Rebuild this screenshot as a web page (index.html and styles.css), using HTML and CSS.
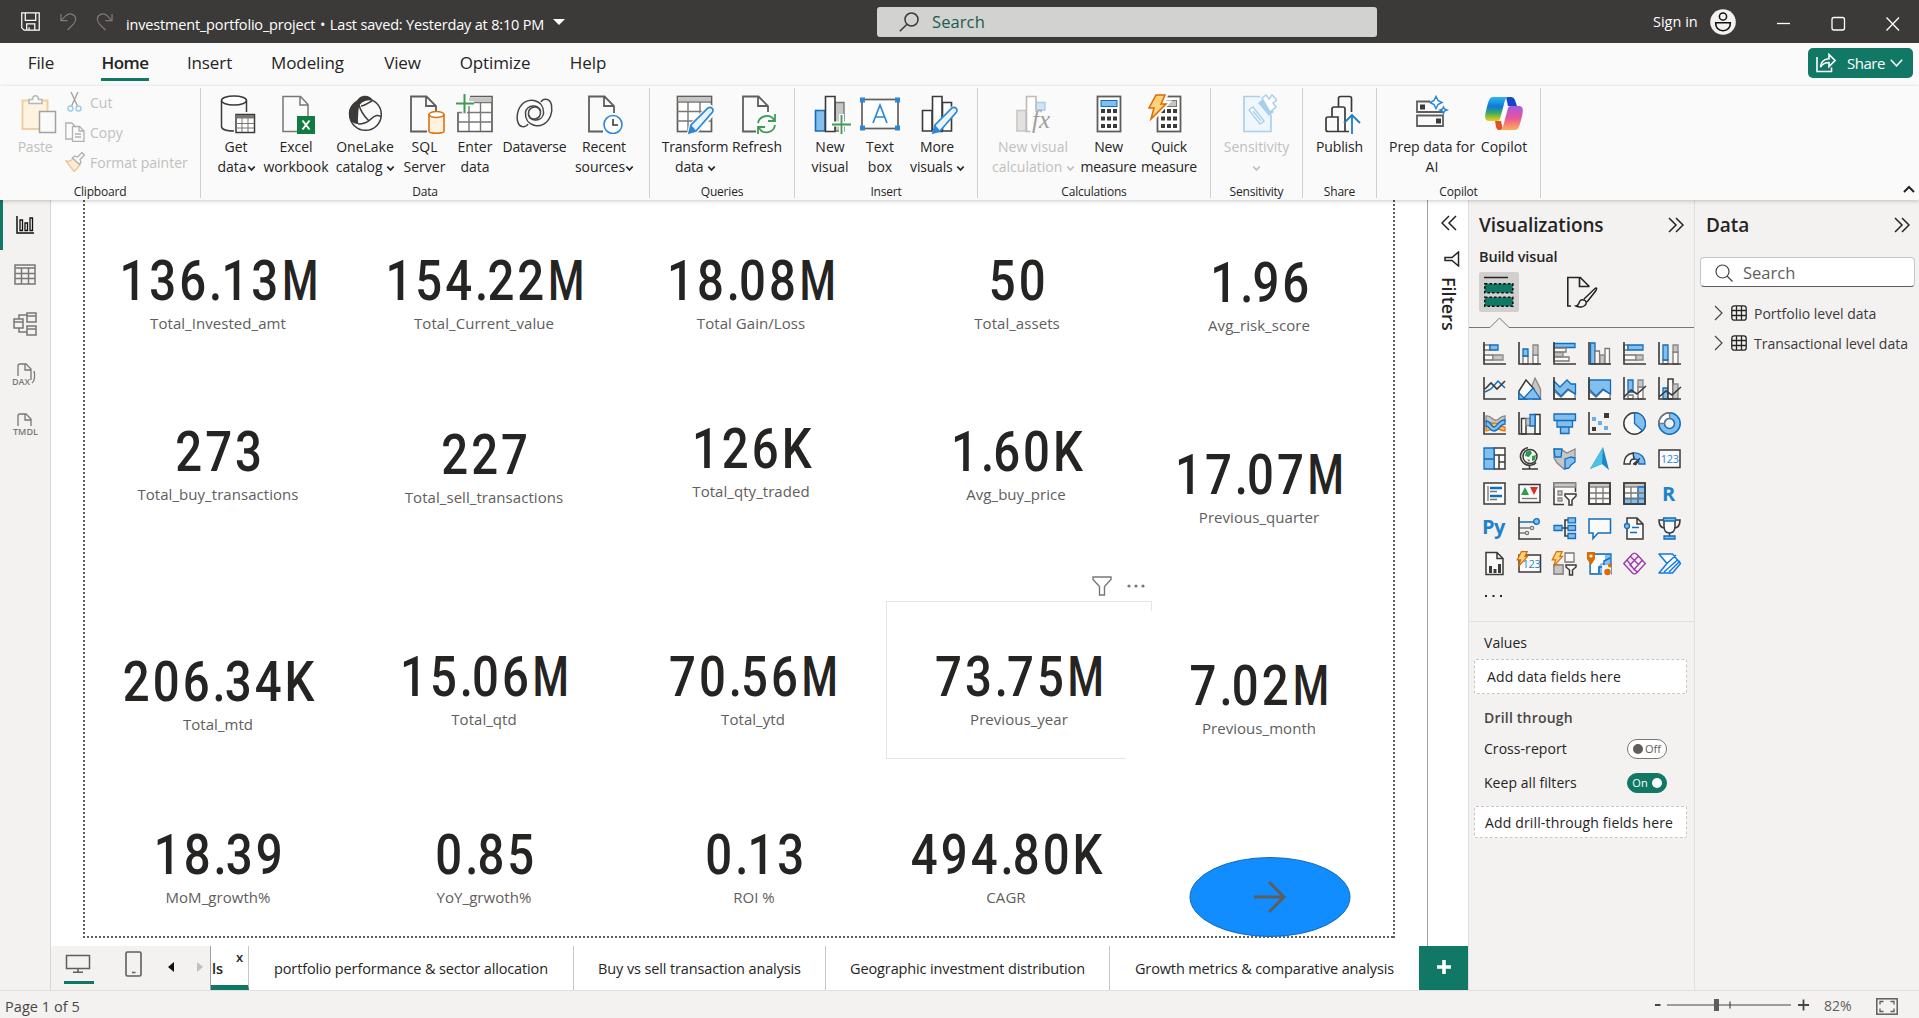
FILE: index.html
```html
<!DOCTYPE html>
<html lang="en">
<head>
<meta charset="utf-8">
<title>investment_portfolio_project</title>
<link rel="stylesheet" href="styles.css">
</head>
<body>
<svg class="defs" width="0" height="0">
  <defs>
    <linearGradient id="cpA" x1="0" y1="0" x2="0" y2="1"><stop offset="0" stop-color="#2bb6f0"/><stop offset=".4" stop-color="#0f78d8"/><stop offset=".65" stop-color="#35a968"/><stop offset="1" stop-color="#f3cf10"/></linearGradient>
    <linearGradient id="cpB" x1="0" y1="0" x2="0" y2="1"><stop offset="0" stop-color="#a25be8"/><stop offset=".5" stop-color="#e8559a"/><stop offset="1" stop-color="#ffae55"/></linearGradient>
    <symbol id="chev" viewBox="0 0 9 7"><path d="M1.3 1.5L4.5 5L7.7 1.5" fill="none" stroke="currentColor" stroke-width="1.8"/></symbol>
    <symbol id="dbl" viewBox="0 0 16 16"><path d="M1 1l7 7-7 7M8 1l7 7-7 7" fill="none" stroke="#252423" stroke-width="1.5"/></symbol>
    <symbol id="tbl" viewBox="0 0 16 16"><rect x=".8" y=".8" width="14.4" height="14.4" rx="2.5" fill="none" stroke="#252423" stroke-width="1.3"/><path d="M5.5 1v14M10.5 1v14M1 5.5h14M1 10.5h14" stroke="#252423" stroke-width="1.3"/></symbol>
    <symbol id="bolt" viewBox="0 0 12 15"><path d="M5 .6h5.5L8.2 5h2.6L2.5 14.2 4.3 8.4H1z" fill="#ffd27d" stroke="#dd6b00" stroke-width="1.1"/></symbol>
    <symbol id="funnel" viewBox="0 0 20 20"><path d="M1 1h18v2.5l-6.5 7V19h-5v-8.500L1 3.500z" fill="none" stroke="#797775" stroke-width="1.4"/></symbol>
  </defs>
</svg>

<header class="titlebar">
  <svg class="i-save" viewBox="0 0 20 20"><path d="M.8.8h18.400v18.400H3.300L.8 16.700z M4.500.8v8h11v-8M6 19v-6.500h8.500V19M8.500 19v-3" fill="none" stroke="#fff" stroke-width="1.3"/></svg>
  <svg class="i-undo" viewBox="0 0 18 20"><path d="M1 2v7h7M1.500 8.500L6 4C10 .3 15.500 2 16.500 6.500c.5 3-.5 4.500-2 6L8 19" fill="none" stroke="#7d7b79" stroke-width="1.3"/></svg>
  <svg class="i-redo" viewBox="0 0 18 20"><path d="M17 2v7h-7M16.500 8.500L12 4C8 .3 2.500 2 1.500 6.500c-.5 3 .5 4.500 2 6L10 19" fill="none" stroke="#7d7b79" stroke-width="1.300"/></svg>
  <span class="doc">investment_portfolio_project <i>•</i> Last saved: Yesterday at 8:10 PM</span>
  <svg class="i-caret" viewBox="0 0 12 6"><path d="M0 0h12L6 6z" fill="#fff"/></svg>
  <div class="topsearch">
    <svg viewBox="0 0 20 20"><circle cx="12.500" cy="7.500" r="6.500" fill="none" stroke="#3b3a39" stroke-width="1.500"/><path d="M8 12.200L.8 19.200" stroke="#3b3a39" stroke-width="1.600"/></svg>
    <span>Search</span>
  </div>
  <span class="signin">Sign in</span>
  <svg class="i-user" viewBox="0 0 26 26"><circle cx="13" cy="13" r="12.800" fill="#f3f2f1"/><circle cx="13" cy="7.500" r="3.600" fill="none" stroke="#111" stroke-width="1.500"/><path d="M5.700 13.700h14.600c.3 5-2.800 8-7.300 8s-7.600-3-7.300-8z" fill="none" stroke="#111" stroke-width="1.600"/></svg>
  <svg class="i-win" viewBox="0 0 130 20"><path d="M3 11.500h13" stroke="#fff" stroke-width="1.300"/><rect x="58" y="5.500" width="12.500" height="12.500" rx="2" fill="none" stroke="#fff" stroke-width="1.300"/><path d="M112.500 5.500l12.500 13M125 5.500l-12.500 13" stroke="#fff" stroke-width="1.300"/></svg>
</header>

<nav class="tabs">
  <span class="t1">File</span><span class="t2"><b>Home</b></span><span class="t3">Insert</span><span class="t4">Modeling</span><span class="t5">View</span><span class="t6">Optimize</span><span class="t7">Help</span>
  <div class="share">
    <svg viewBox="0 0 20 20"><path d="M1 4v14.500h14.500v-4" fill="none" stroke="#fff" stroke-width="1.600"/><path d="M4.500 14c.5-5 3-8 8.500-8.200V1.500l6 6-6 6V9.500c-4 0-6.500 1.500-8.500 4.500z" fill="none" stroke="#fff" stroke-width="1.600"/></svg>
    <span>Share</span>
    <svg class="sc" viewBox="0 0 13 8"><path d="M.8.8L6.500 6.800 12.200.8" fill="none" stroke="#fff" stroke-width="1.500"/></svg>
  </div>
</nav>

<section class="ribbon">
  <div class="group g-clip off">
    <div class="body">
      <div class="btn paste"><svg width="36" height="40" viewBox="0 0 36 40"><path d="M18 35H1.500V6.500h25V17" fill="#fdf3df" stroke="#f1cfa0" stroke-width="2"/><path d="M8 9.500V5.500h3.500c0-5 6-5 6 0H21v4z" fill="#fafafa" stroke="#b9b8b6" stroke-width="1.500"/><rect x="18.500" y="17.500" width="16" height="21" fill="#fafafa" stroke="#a3a2a0" stroke-width="1.500"/></svg><span>Paste</span></div>
      <div class="clips">
        <div><svg width="20" height="20" viewBox="0 0 20 20"><path d="M6 0l6.500 14M13 0L6.500 14" stroke="#a19f9d" stroke-width="1.300"/><circle cx="5.500" cy="16.500" r="2.500" fill="none" stroke="#9ecbe8" stroke-width="1.400"/><circle cx="13.500" cy="16.500" r="2.500" fill="none" stroke="#9ecbe8" stroke-width="1.400"/></svg>Cut</div>
        <div><svg width="20" height="20" viewBox="0 0 20 20"><path d="M7 17H.8V1h6l4 4" fill="none" stroke="#b3b1af" stroke-width="1.300"/><path d="M7.500 4.500h7l4.500 4.500v10.300H7.500zM14 4.500V9h5M10 12h6M10 15h6" fill="none" stroke="#b3b1af" stroke-width="1.300"/></svg>Copy</div>
        <div><svg width="20" height="20" viewBox="0 0 20 20"><path d="M1 9c4 1 6-1 7-3l7 7c-2 2-4 5-6 6.500z" fill="#fdebd3" stroke="#f0c494" stroke-width="1.300"/><path d="M7.500 6l2-2 3 1 4.500-4.500 2.500 2.500-4.500 4.500 1 3-1.500 2z" fill="#fafafa" stroke="#b3b1af" stroke-width="1.300"/></svg>Format painter</div>
      </div>
    </div>
    <label>Clipboard</label>
  </div>
  <div class="group g-data">
    <div class="body">
      <div class="btn w54 wideicon"><svg width="36" height="40" viewBox="0 0 36 40"><ellipse cx="14" cy="6.500" rx="12.500" ry="4.500" fill="#fff" stroke="#3b3a39" stroke-width="1.500"/><path d="M1.500 6.500v26c0 3 6 4.500 12.500 4.500M26.500 6.500V18" fill="none" stroke="#3b3a39" stroke-width="1.500"/><rect x="16" y="20.500" width="18.500" height="18" fill="#fff" stroke="#3b3a39" stroke-width="1.500"/><rect x="16.500" y="21" width="17.500" height="3.500" fill="#797775"/><path d="M22 24v14M28 24v14M16 29.500h18M16 34h18" stroke="#797775"/></svg><span>Get<br>data<svg class="ch"><use href="#chev"/></svg></span></div>
      <div class="btn w66 wideicon"><svg width="36" height="40" viewBox="0 0 36 40"><path d="M17 37.500H3V2.500h17.500l7.500 8V22M20 2.500V11h8" fill="none" stroke="#797775" stroke-width="1.500"/><rect x="17" y="22" width="18" height="18" fill="#107c41"/><path d="M22.500 26.500l7 9M29.500 26.500l-7 9" stroke="#fff" stroke-width="2"/></svg><span>Excel<br>workbook</span></div>
      <div class="btn w72"><svg width="36" height="40" viewBox="0 0 36 40"><circle cx="18.500" cy="20.500" r="15.800" fill="#fafafa" stroke="#3b3a39" stroke-width="1.500"/><path d="M9.500 8C12 0 23 0 26 6.500c-5-.5-10 0-13 4-2 3-1.500 9-2 14-.3 3 .5 4 0 5.500C-1 29-1 12 9.500 8z" fill="#3b3a39"/><path d="M12 11c1.500 6 5 11 9.500 15.500M11 30c5 0 9-1 13-5 4-4 8-4.500 10-2M14 12c3 0 7-3 11-5" fill="none" stroke="#3b3a39" stroke-width="1.500"/></svg><span>OneLake<br>catalog <svg class="ch"><use href="#chev"/></svg></span></div>
      <div class="btn w47 wideicon"><svg width="36" height="40" viewBox="0 0 36 40"><path d="M18 37.500H2V2.500h15.500l9.500 9.500v5M17 2.500V12h10" fill="none" stroke="#605e5c" stroke-width="1.800"/><path d="M20 20v17c0 3 15 3 15 0V20" fill="#fff3e0" stroke="#d9730f" stroke-width="1.600"/><ellipse cx="27.500" cy="20.500" rx="7.500" ry="3" fill="#fff" stroke="#d9730f" stroke-width="1.600"/></svg><span>SQL<br>Server</span></div>
      <div class="btn w54"><svg width="40" height="40" viewBox="0 0 40 40"><path d="M3 18v19.500h34v-35H15" fill="#fff" stroke="#605e5c" stroke-width="1.700"/><path d="M14 3.500h22.500v4H14z" fill="#c8c6c4"/><path d="M14 10v27M25.500 9v28M3 18.500h34M3 28h34M15 8.500h22" stroke="#797775" stroke-width="1.400" fill="none"/><path d="M9.500 0v19M1 9.500h18" stroke="#fafafa" stroke-width="5"/><path d="M9.500 0v19M1 9.500h18" stroke="#3f9b54" stroke-width="2"/></svg><span>Enter<br>data</span></div>
      <div class="btn w65"><svg width="38" height="40" viewBox="0 0 38 40"><g fill="none" stroke="#484644" stroke-width="1.500"><path d="M12 30c-1 2-3 3-6 2.500C1 31.500 0 23 2.500 16 6 7.500 13 5.500 18 6.500c7 1.500 10 7 9.500 13-1 8-13.500 9-15 1-.500-8 9-10 12-3.500"/><path d="M25 8c1-2 3-3 6-2.500 5 1 6 9.500 3.500 16.500C31 30.500 24 32.500 19 31.500c-7-1.500-10-7-9.500-13 1-8 13.500-9 15-1 .5 8-9 10-12 3.500"/></g></svg><span>Dataverse</span></div>
      <div class="btn w74"><svg width="38" height="40" viewBox="0 0 38 40"><path d="M18 37.500H4V2.500h15.500l9.500 9.500v7M19 2.500V12h10" fill="none" stroke="#605e5c" stroke-width="1.800"/><circle cx="28" cy="30.500" r="9" fill="#fff" stroke="#2b88d8" stroke-width="1.600"/><path d="M28 25v6h5" fill="none" stroke="#3b3a39" stroke-width="1.600"/></svg><span>Recent<br>sources<svg class="ch"><use href="#chev"/></svg></span></div>
    </div>
    <label>Data</label>
  </div>
  <div class="group g-query">
    <div class="body">
      <div class="btn w68"><svg width="40" height="40" viewBox="0 0 40 40"><rect x="2.500" y="2.500" width="34" height="35" fill="#fff" stroke="#605e5c" stroke-width="1.700"/><path d="M3 3h33v4H3z" fill="#c8c6c4"/><path d="M13 8v30M25 8v30M2 8h34M2 17.500h34M2 27h34" stroke="#797775" stroke-width="1.400"/><path d="M14 39.500l2-8L34.500 12l6 5-19 20z" fill="#fafafa" stroke="#fafafa" stroke-width="4"/><path d="M14 39l2-8 17-17c3-2 6 1 4.500 4L21 37z" fill="#eaf4fc" stroke="#2b88d8" stroke-width="1.700"/><path d="M14 39l2-8 5 5.500z" fill="#2b88d8"/></svg><span>Transform<br>data <svg class="ch"><use href="#chev"/></svg></span></div>
      <div class="btn w56 wideicon"><svg width="36" height="40" viewBox="0 0 36 40"><path d="M15 37.500H2V2.500h15.500l9.500 9.500v6M17 2.500V12h10" fill="none" stroke="#605e5c" stroke-width="1.800"/><path d="M17 29c1-7 12-10 16-3M34 20v7h-7M34 31c-1 8-12 10-16 3M17 40v-7h7" fill="none" stroke="#3f9b54" stroke-width="1.800"/></svg><span>Refresh</span></div>
    </div>
    <label>Queries</label>
  </div>
  <div class="group g-insert">
    <div class="body">
      <div class="btn w46 wideicon"><svg width="38" height="40" viewBox="0 0 38 40"><path d="M2.500 16.500H12V37H2.500z" fill="#83beec" stroke="#106ebe" stroke-width="1.600"/><path d="M22 8.500h9V37h-9z" fill="#c8c6c4" stroke="#797775" stroke-width="1.400"/><path d="M12.500 2.500h9.500v35h-9.500z" fill="#fff" stroke="#3b3a39" stroke-width="1.600"/><path d="M28.500 20v20M19 30h19" stroke="#fafafa" stroke-width="5"/><path d="M28.500 21v19M19 30.500h19" stroke="#3f9b54" stroke-width="1.800"/></svg><span>New<br>visual</span></div>
      <div class="btn w54"><svg width="42" height="40" viewBox="0 0 42 40"><rect x="3" y="5.500" width="36" height="29" fill="#fff" stroke="#605e5c" stroke-width="1.700"/><path d="M1 3.500h5v5H1zM36 3.500h5v5h-5zM1 31.500h5v5H1zM36 31.500h5v5h-5z" fill="#2b88d8"/><path d="M14 29l7-18 7 18M16.500 23h9" fill="none" stroke="#2b88d8" stroke-width="1.700"/></svg><span>Text<br>box</span></div>
      <div class="btn w60 wideicon"><svg width="38" height="40" viewBox="0 0 38 40"><path d="M2.500 16.500H12V37H2.500zM22.500 8.500h9V37h-9zM12.500 2.500h9.500v35h-9.500z" fill="#fff" stroke="#3b3a39" stroke-width="1.600"/><path d="M12 40l2-8L32 12l6 5-19 20z" fill="#fafafa"/><path d="M13 39l2-8 17-17c3-2 6 1 4.500 4L20 37z" fill="#eaf4fc" stroke="#2b88d8" stroke-width="1.700"/><path d="M13 39l2-8 5 5.500z" fill="#2b88d8"/></svg><span>More<br>visuals <svg class="ch"><use href="#chev"/></svg></span></div>
    </div>
    <label>Insert</label>
  </div>
  <div class="group g-calc">
    <div class="body">
      <div class="btn w92 off"><svg width="38" height="40" viewBox="0 0 38 40"><path d="M3 16.500h9V37H3z" fill="#e3e2e0" stroke="#c8c6c4" stroke-width="1.600"/><path d="M22 8.500h9V16h-9z" fill="#cfe5f7" stroke="#a6cdec" stroke-width="1.400"/><path d="M12.500 2.500h9.500v35h-9.500z" fill="#fff" stroke="#bdbbb9" stroke-width="1.600"/><path d="M19 18h18v22H16z" fill="#fafafa"/><text x="18" y="34" class="fx">fx</text></svg><span>New visual<br>calculation <svg class="ch"><use href="#chev"/></svg></span></div>
      <div class="btn w59"><svg width="26" height="40" viewBox="0 0 26 40"><rect x="1.500" y="2.500" width="23" height="35" fill="#fff" stroke="#605e5c" stroke-width="1.800"/><rect x="5" y="6.500" width="16" height="6" fill="#83beec" stroke="#106ebe"/><path d="M5 17h16M5 24.500h16M5 32h16" stroke="#3b3a39" stroke-width="4" stroke-dasharray="4 2"/></svg><span>New<br>measure</span></div>
      <div class="btn w62 qm"><svg width="34" height="40" viewBox="0 0 34 40"><rect x="9.500" y="2.500" width="23" height="35" fill="#fff" stroke="#605e5c" stroke-width="1.800"/><rect x="14" y="6.500" width="14.500" height="6" fill="#c8c6c4" stroke="#797775"/><path d="M13 17h16M13 24.500h16M13 32h16" stroke="#3b3a39" stroke-width="4" stroke-dasharray="4 2"/><path d="M8 0h11l-3 8h5L3 28l3-13H0z" fill="#fafafa" stroke="#fafafa" stroke-width="3"/><path d="M8 1h9l-4 9h5L3 25l3-11H1z" fill="#ffd27d" stroke="#dd6b00" stroke-width="1.500"/></svg><span>Quick<br>measure</span></div>
    </div>
    <label>Calculations</label>
  </div>
  <div class="group g-sens">
    <div class="body">
      <div class="btn w91 off wideicon"><svg width="36" height="40" viewBox="0 0 36 40"><path d="M19 2.500H3v35h27V21" fill="#f0f7fc" stroke="#a9d0ea" stroke-width="1.700"/><path d="M8 16l4-3 11 14-4 3zM12 17l8 10" fill="#fff" stroke="#a9d0ea" stroke-width="1.500"/><path d="M17 9l5-4 11 13-5 4z" fill="#a9d0ea"/><path d="M21 4l4-3 3 4 3-4 5 5-4 3 3 4-6 5z" fill="#fff" stroke="#a9d0ea" stroke-width="1.500"/></svg><span>Sensitivity<br><svg class="ch up"><use href="#chev"/></svg></span></div>
    </div>
    <label>Sensitivity</label>
  </div>
  <div class="group g-share">
    <div class="body">
      <div class="btn w74 wideicon"><svg width="38" height="40" viewBox="0 0 38 40"><path d="M26 37.500H5a2 2 0 01-2-2V25a2 2 0 012-2h10v14M9 23V15a2 2 0 012-2h9a2 2 0 012 2v22M15.500 13V4.500a2 2 0 012-2h9a2 2 0 012 2V18" fill="none" stroke="#3b3a39" stroke-width="1.700"/><path d="M29 19v21" stroke="#fafafa" stroke-width="5"/><path d="M29 21v19M21 29l8-8 8 8" fill="none" stroke="#1f7ec2" stroke-width="1.800"/></svg><span>Publish</span></div>
    </div>
    <label>Share</label>
  </div>
  <div class="group g-cop">
    <div class="body">
      <div class="btn w94"><svg width="36" height="40" viewBox="0 0 36 40"><path d="M16 7.500H3v10.500h25v-3M3 21.500h26v10.500H3z" fill="none" stroke="#605e5c" stroke-width="1.800"/><path d="M6 10.500h5v5H6zM22 24.500h5v5h-5z" fill="#3b3a39"/><path d="M22 2.500l2 4 4 2-4 2-2 4-2-4-4-2 4-2zM29.500 13l1 2 2.500 1-2.500 1-1 2.500-1-2.500-2.500-1 2.500-1z" fill="#fafafa" stroke="#2b88d8" stroke-width="1.500"/></svg><span>Prep data for<br>AI</span></div>
      <div class="btn w50"><svg width="40" height="40" viewBox="0 0 40 40"><path d="M22 3h5c3 0 4 3 5 6l1 3h-9z" fill="#1547c4"/><path d="M9 3h16c-3 0-4 3-5 7l-4 15c-1 2-2 2-4 2H5c-5 0-4-6-3-10C4 9 5 3 9 3z" fill="url(#cpA)"/><path d="M11 27h6l2 9h-4c-3 0-3-4-4-9z" fill="#e2502c"/><path d="M31 36H15c3 0 4-3 5-7l4-15c1-2 2-2 4-2h7c5 0 4 6 3 10-2 8-3 14-7 14z" fill="url(#cpB)"/></svg><span>Copilot</span></div>
    </div>
    <label>Copilot</label>
  </div>
  <svg class="collapse" viewBox="0 0 12 8"><path d="M1 7l5-5 5 5" fill="none" stroke="#252423" stroke-width="2"/></svg>
</section>

<main class="work">
  <aside class="rail">
    <div class="on"><svg width="20" height="20" viewBox="0 0 20 20"><path d="M2 1v17h17" fill="none" stroke="#111" stroke-width="1.500"/><path d="M5 5h2.500v10.500H5zM10 8h2.500v7.500H10zM15 3h2.500v12.500H15z" fill="none" stroke="#111" stroke-width="1.300"/></svg></div>
    <div><svg width="22" height="21" viewBox="0 0 22 21"><path d="M1 1h20v19H1zM1 4h20M1 9.500h20M1 14.500h20M7.500 4v16M14.500 4v16" fill="none" stroke="#797775" stroke-width="1.500"/></svg></div>
    <div><svg width="24" height="24" viewBox="0 0 24 24"><path d="M14 1h9v9h-9zM14 4h9M14 14h9v9h-9zM14 17h9M1 7h9v9H1zM1 10h9M6 7V3h8M6 16v4h8" fill="none" stroke="#797775" stroke-width="1.500"/></svg></div>
    <div class="low"><svg width="26" height="24" viewBox="0 0 26 24"><path d="M6 13V3a2 2 0 012-2h6l5 5v11M13 1v6h6M22 8c1 4 1 10-2 12" fill="none" stroke="#797775" stroke-width="1.300"/><text x="0" y="21.500" class="tiny">DAX</text></svg></div>
    <div class="low"><svg width="26" height="24" viewBox="0 0 26 24"><path d="M6 13V3a2 2 0 012-2h6l5 5v7M13 1v6h6" fill="none" stroke="#797775" stroke-width="1.300"/><text x="1" y="21.500" class="tiny">TMDL</text></svg></div>
  </aside>

  <div class="center">
    <div class="stage">
      <div class="canvas">
        <div class="page">
          <div class="selected"></div>
          <svg class="vfilter"><use href="#funnel"/></svg>
          <svg class="vmore" viewBox="0 0 20 4"><circle cx="3" cy="2" r="1.600"/><circle cx="10" cy="2" r="1.600"/><circle cx="17" cy="2" r="1.600"/></svg>
          <div class="kpi" style="left:134px;top:61px"><b>136<i>.</i>13<u>M</u></b><span>Total_Invested_amt</span></div>
          <div class="kpi" style="left:400px;top:61px"><b>154<i>.</i>22<u>M</u></b><span>Total_Current_value</span></div>
          <div class="kpi" style="left:667px;top:61px"><b>18<i>.</i>08<u>M</u></b><span>Total Gain/Loss</span></div>
          <div class="kpi" style="left:933px;top:61px"><b>50</b><span>Total_assets</span></div>
          <div class="kpi" style="left:1175px;top:63px"><b>1<i>.</i>96</b><span>Avg_risk_score</span></div>
          <div class="kpi" style="left:134px;top:232px"><b>273</b><span>Total_buy_transactions</span></div>
          <div class="kpi" style="left:400px;top:235px"><b>227</b><span>Total_sell_transactions</span></div>
          <div class="kpi" style="left:667px;top:229px"><b>126K</b><span>Total_qty_traded</span></div>
          <div class="kpi" style="left:932px;top:232px"><b>1<i>.</i>60K</b><span>Avg_buy_price</span></div>
          <div class="kpi" style="left:1175px;top:255px"><b>17<i>.</i>07<u>M</u></b><span>Previous_quarter</span></div>
          <div class="kpi" style="left:134px;top:462px"><b>206<i>.</i>34K</b><span>Total_mtd</span></div>
          <div class="kpi" style="left:400px;top:457px"><b>15<i>.</i>06<u>M</u></b><span>Total_qtd</span></div>
          <div class="kpi" style="left:669px;top:457px"><b>70<i>.</i>56<u>M</u></b><span>Total_ytd</span></div>
          <div class="kpi" style="left:935px;top:457px"><b>73<i>.</i>75<u>M</u></b><span>Previous_year</span></div>
          <div class="kpi" style="left:1175px;top:466px"><b>7<i>.</i>02<u>M</u></b><span>Previous_month</span></div>
          <div class="kpi" style="left:134px;top:635px"><b>18<i>.</i>39</b><span>MoM_growth%</span></div>
          <div class="kpi" style="left:400px;top:635px"><b>0<i>.</i>85</b><span>YoY_grwoth%</span></div>
          <div class="kpi" style="left:670px;top:635px"><b>0<i>.</i>13</b><span>ROI %</span></div>
          <div class="kpi" style="left:922px;top:635px"><b>494<i>.</i>80K</b><span>CAGR</span></div>
          <svg class="next" viewBox="0 0 162 82"><ellipse cx="81" cy="41" rx="80" ry="39.500" fill="#118dff" stroke="#1569bd"/><path d="M65 41h30M80 26l15 15-15 15" fill="none" stroke="#605e5c" stroke-width="3"/></svg>
        </div>
      </div>
      <aside class="filters">
        <svg class="dl"><use href="#dbl"/></svg>
        <svg class="ff" viewBox="0 0 16 16"><path d="M14.500 1v14L8 9.500H1v-3h7z" fill="none" stroke="#252423" stroke-width="1.500"/></svg>
        <span>Filters</span>
      </aside>
    </div>
    <footer class="pages">
      <div class="views">
        <div class="desk"><svg width="26" height="20" viewBox="0 0 26 20"><path d="M1.500 1.500h23v13h-23zM13 14v4M8 18.300h10" fill="none" stroke="#605e5c" stroke-width="1.500"/></svg></div>
        <svg class="phone" viewBox="0 0 18 26"><rect x="1" y="1" width="15" height="24" rx="1.500" fill="none" stroke="#605e5c" stroke-width="1.600"/><path d="M7 21.500h3.500" stroke="#605e5c" stroke-width="1.500"/></svg>
        <svg class="arr" viewBox="0 0 6 10"><path d="M6 0v10L0 5z" fill="#111"/></svg>
        <svg class="arr r" viewBox="0 0 6 10"><path d="M0 0v10l6-5z" fill="#c2c0be"/></svg>
      </div>
      <div class="pt cur"><span>ls</span><i>x</i></div>
      <div class="pt p2">portfolio performance &amp; sector allocation</div>
      <div class="pt p3">Buy vs sell transaction analysis</div>
      <div class="pt p4">Geographic investment distribution</div>
      <div class="pt p5">Growth metrics &amp; comparative analysis</div>
      <div class="plus"><svg width="14" height="14" viewBox="0 0 14 14"><path d="M7 0v14M0 7h14" stroke="#fff" stroke-width="3.600"/></svg></div>
    </footer>
  </div>

  <aside class="viz">
    <div class="head"><h2>Visualizations</h2><svg><use href="#dbl"/></svg></div>
    <h3>Build visual</h3>
    <div class="modes">
      <div class="m1"><svg width="32" height="32" viewBox="0 0 32 32"><path d="M1 1.500h24" stroke="#252423" stroke-width="1.500"/><path d="M1.800 7.800h28v9h-28zM1.800 21.300h28v9h-28z" fill="#117865" stroke="#111" stroke-width="1.600" stroke-dasharray="2.600 2"/></svg></div>
      <svg class="m2" width="32" height="32" viewBox="0 0 32 32"><path d="M5 30H1.800V1.500h12.500l9 9M13.500 1.500v9h10" fill="none" stroke="#252423" stroke-width="1.600"/><path d="M10 30c4-1 2-4 5-6 3-1 6 1 5 4-1 3-6 4-10 2zM18 23L29 12.500c2-1 2 0 1 2L21 26" fill="#f3f2f1" stroke="#252423" stroke-width="1.500"/></svg>
    </div>
    <svg class="notch" viewBox="0 0 225 12"><path d="M0 10.500h21L30.500 1 40 10.500h185" fill="none" stroke="#797775"/></svg>
    <div class="icons">
      <svg viewBox="0 0 23 23"><path class="w" d="M1 3h6v5H1zM1 13h9v5H1z"/><path class="b" d="M7 3h8v5H7z"/><path class="g" d="M10 13h10v5H10z"/><path class="k" d="M1 0v22h22"/></svg>
      <svg viewBox="0 0 23 23"><path class="w" d="M5 14h5v8H5zM15 13h5v9h-5z"/><path class="b" d="M5 7h5v7H5z"/><path class="g" d="M15 3h5v10h-5z"/><path class="k" d="M1 0v22h22"/></svg>
      <svg viewBox="0 0 23 23"><path class="b" d="M1 1.500h21v4H1z"/><path class="w" d="M1 6h12v4H1zM1 15h15v4H1z"/><path class="g" d="M1 10.500h9v4H1z"/><path class="k" d="M1 0v22h22"/></svg>
      <svg viewBox="0 0 23 23"><path class="b" d="M2.500 1h4.500v21H2.500z"/><path class="w" d="M7 9h4.500v13H7zM17 6.500h4.500V22H17z"/><path class="g" d="M12 13h4.500v9H12z"/><path class="k" d="M1 0v22h22"/></svg>
      <svg viewBox="0 0 23 23"><path class="w" d="M1 3h4v5H1zM1 13h12v5H1z"/><path class="b" d="M5 3h15v5H5z"/><path class="g" d="M13 13h7v5h-7z"/><path class="k" d="M1 0v22h22"/></svg>
      <svg viewBox="0 0 23 23"><path class="w" d="M5 18h5v4H5zM15 10h5v12h-5z"/><path class="b" d="M5 3h5v15H5z"/><path class="g" d="M15 3h5v7h-5z"/><path class="k" d="M1 0v22h22"/></svg>

      <svg viewBox="0 0 23 23"><path class="bl" d="M2 15l6-3 7-8 7 7"/><path class="k" d="M2 12l6-6 6 6 8-8M1 0v22h22"/></svg>
      <svg viewBox="0 0 23 23"><path class="g" d="M10 19l7-18 5.500 11v10H15z"/><path class="w k2" d="M1 14l7-11 8 9-7 10H1z"/><path class="b" d="M1 16l5 5 9-10 7.500 11H1z"/></svg>
      <svg viewBox="0 0 23 23"><path class="w" d="M1 14l7 6 7-7 7 4v5H1z"/><path class="b" d="M1 4l6 6 7-7 4 4h4.500v10L15 12l-7 7-7-7z"/><path class="k" d="M1 0v22h22"/></svg>
      <svg viewBox="0 0 23 23"><path class="w" d="M1 14l7 6 7-7 7 4v5H1z"/><path class="b" d="M1 3h21.500v14L15 12l-7 7-7-7z"/><path class="k" d="M1 0v22h22"/></svg>
      <svg viewBox="0 0 23 23"><path class="b" d="M5 3h5v12H5z"/><path class="w" d="M5 18h5v4H5zM15 10h5v12h-5z"/><path class="g" d="M15 3h5v7h-5z"/><path class="k" d="M1 0v22h22M1 20l7-7 6 4 9-8"/></svg>
      <svg viewBox="0 0 23 23"><path class="b" d="M5 11h5v11H5z"/><path class="w k2" d="M10 2h5v20h-5z"/><path class="g" d="M15 7h5v15h-5z"/><path class="k" d="M1 0v22h22M1 20l7-6 6 4 9-8"/></svg>

      <svg viewBox="0 0 23 23"><path class="g" d="M3 4c6-1 7 6 11 4 3-2 4-4 8-4v5c-4 0-6 4-10 3S7 10 3 10z"/><path class="o" d="M3 14c5 0 5-3 9-3s6 4 10 4v4c-5 0-6-3-10-3s-4 3-9 3z"/><path class="b" d="M3 9c5 0 5 6 8 6s4-7 11-7v4c-5 0-6 7-11 7s-4-5-8-5z"/><path class="k" d="M1 0v22h22"/></svg>
      <svg viewBox="0 0 23 23"><path class="w k2" d="M3.500 6.500H8V22H3.500zM17 2.500h5V22h-5z"/><path class="g" d="M8 6.500h5v7H8z"/><path class="b" d="M12 2.500h5V14h-5z"/><path class="k" d="M1 0v22h22"/></svg>
      <svg viewBox="0 0 23 23"><path class="b" d="M1 2h21.500v6.500H1zM4 8.500h15.500V15H4zM7.500 15H16v6.500H7.500z"/></svg>
      <svg viewBox="0 0 23 23"><path d="M16 1h5v5h-5zM4 15h4v4H4z" fill="#3b3a39"/><path d="M4 5h4v4H4zM10 9h4v4h-4zM16 14h4v4h-4z" fill="#69afe5"/><path class="k" d="M1 0v22h22"/></svg>
      <svg viewBox="0 0 23 23"><circle class="w k2" cx="11.500" cy="11.500" r="10.700"/><path class="b" d="M11.500.8a10.700 10.700 0 018 18l-8-7.300z"/></svg>
      <svg viewBox="0 0 23 23"><circle cx="11.500" cy="11.500" r="8" fill="none" stroke="#83beec" stroke-width="6"/><path d="M3.500 11.500a8 8 0 018-8" fill="none" stroke="#fff" stroke-width="5"/><circle class="bl" cx="11.500" cy="11.500" r="10.700"/><circle class="bl" cx="11.500" cy="11.500" r="5"/><path class="gl" d="M.8 11.500A10.700 10.700 0 0111.500.8v5.500a5 5 0 00-5 5z"/></svg>

      <svg viewBox="0 0 23 23"><path class="w k2" d="M11 1h11v7H11zM11 8h5v14h-5zM16 8h6v7h-6zM16 15h6v7h-6z"/><path class="b" d="M1 1h10v11H1zM1 12h10v10H1z"/></svg>
      <svg viewBox="0 0 23 23"><circle class="w k2" cx="12" cy="9.500" r="7"/><path d="M8 5l4-2 2 3-3 4-4-1zM14 9l4-1-1 5-3 1zM9 12l3 1-1 2z" fill="#2c9a4b"/><path class="k" d="M10 .8C2 2 .500 11 5 15.500s11 3 13 0M11.500 18v4M4 22h16"/></svg>
      <svg viewBox="0 0 23 23"><path class="g" d="M1 2l8 1 5 3 8-4v9l-4 3-7 8-7-6-3-5z"/><path class="b" d="M1 2h8l-1 8H2zM12 12l6-2 4 1v4l-4 3-2 3-4 1z"/></svg>
      <svg viewBox="0 0 23 23"><path d="M15 0l6 23-7-6-12 5z" fill="#1d86c8"/><path d="M15 0l-1 17-12 5z" fill="#4fc0e6"/></svg>
      <svg viewBox="0 0 23 23"><path class="b" d="M10 6c7-1 12 4 12 11h-6c0-3-2-5-5-5z"/><path class="w k2" d="M1 17C1 11 4 7 10 6l1 6c-3 0-4 2-4 5z"/><path d="M10 17l7-6-4 7z" fill="#3b3a39" stroke="#3b3a39"/></svg>
      <svg viewBox="0 0 23 23"><rect class="w k2" x="1" y="3" width="21" height="17.500"/><text x="2.800" y="15.500" class="n123">123</text></svg>

      <svg viewBox="0 0 23 23"><rect class="w k2" x="1" y="1" width="21" height="21"/><path class="bl2" d="M7 6h12M7 14h12"/><path class="gl" d="M5 4v15M7 9.500h7M7 17.500h7"/></svg>
      <svg viewBox="0 0 23 23"><rect class="w k2" x="1" y="2.500" width="21" height="18"/><path d="M7 5l4 8H3z" fill="#359b4c"/><path d="M16 13l-4-8h8z" fill="#d93025"/><path class="gl" d="M4 16.500h15"/></svg>
      <svg viewBox="0 0 24 24" class="wide"><path class="w k2" d="M1 1h21.500v21.500H1z"/><path class="g" d="M1 1h21.500v4H1zM5 9h4v4H5zM5 16h4v3H5z"/><path d="M11 10h13v14H11z" fill="#f3f2f1"/><path class="w k2" d="M12 12h11v2l-4 4v5h-3v-5l-4-4z"/></svg>
      <svg viewBox="0 0 23 23"><path class="w k2" d="M1 1h21v21H1z"/><path class="g" d="M1 1h21v4H1z"/><path class="gl" d="M8 5v17M15 5v17M1 11h21M1 16.500h21"/><path class="k" d="M1 1h21v21H1z"/></svg>
      <svg viewBox="0 0 23 23"><path class="w k2" d="M1 1h21v21H1z"/><path class="g" d="M1 1h21v4H1z"/><path class="b" d="M15 5h7v17H15zM8 16.500h14V22H1v-5.500z"/><path class="gl" d="M8 5v17M15 5v17M1 11h21M1 16.500h21"/><path class="k" d="M1 1h21v21H1z"/></svg>
      <svg viewBox="0 0 23 23"><text x="4" y="19" class="lang">R</text></svg>

      <svg viewBox="0 0 23 23"><text x="-1" y="16.500" class="lang py">Py</text></svg>
      <svg viewBox="0 0 23 23"><path class="bl" d="M1 5h15"/><path class="gl" d="M1 11h12M1 16h7"/><circle class="b" cx="18.500" cy="4.500" r="2.800"/><circle class="w" cx="14" cy="11" r="1.600"/><circle class="w" cx="9" cy="16" r="1.600"/><path class="k" d="M1 0v22h22"/></svg>
      <svg viewBox="0 0 23 23"><path class="k" d="M9 11h6M15 3h-3v16h3"/><path class="b" d="M1 8.500h8v5H1zM15 .800h7.500v5H15zM15 8.500h7.500v5H15zM15 16.500h7.500v5H15z"/></svg>
      <svg viewBox="0 0 23 23"><path d="M1 2h21.500v14H10l-5 5.500V16H1z" fill="#fafafa" stroke="#106ebe" stroke-width="1.500"/></svg>
      <svg viewBox="0 0 23 23"><path class="w k2" d="M4 6V1h10l6 6v15H4V12M14 1v6h6"/><circle class="b" cx="4" cy="9" r="2.500"/><path class="bl" d="M9 10.500h7M7 15.500h7"/></svg>
      <svg viewBox="0 0 23 23"><path class="k" d="M6 3H1c0 5 2 8 6 8M17 3h5c0 5-2 8-6 8"/><path class="w k2" d="M6 2h11v7c0 6-3 7-5.500 7S6 15 6 9zM11.500 16v4"/><path class="b" d="M5.500 1h12v3h-12zM6 19h11v3H6z"/></svg>

      <svg viewBox="0 0 23 23"><path class="w k2" d="M3 .5h11l6 6v16H3zM14 .5v6h6"/><path d="M6 14h3v7H6zM10.500 17h3v4h-3zM15 12h3v9h-3z" fill="#3b3a39"/></svg>
      <svg viewBox="0 0 23 23"><rect class="w k2" x="1" y="3" width="21.500" height="17"/><text x="4.500" y="15.500" class="n123">123</text><use href="#bolt" x="-2" y="-1" width="13" height="16"/></svg>
      <svg viewBox="0 0 24 24" class="wide"><path class="w" d="M12 1h9v9h-9zM1 13h9v9H1z"/><path class="g" d="M1 13h9v9H1z"/><path class="w k2" d="M13 13h10v2l-3.500 3v5h-3v-5L13 15z"/><use href="#bolt" x="-2" y="-1" width="13" height="16"/></svg>
      <svg viewBox="0 0 23 23"><path class="b" d="M2 2h21v20H2z"/><path d="M3 3h14v8h-4l-3 4v6H3z" fill="#fff"/><path class="bl" d="M22 6l-6 3v6h-5v6"/><path d="M-1 0h8v7l-4 6-4-6z" fill="#dd6b00"/><circle cx="3" cy="4" r="1.600" fill="#fff"/><path d="M14 13h9v10h-9z" fill="#f3f2f1"/><circle cx="19.500" cy="20" r="3.200" fill="#dd6b00"/><circle cx="22" cy="13.500" r="2" fill="#dd6b00"/></svg>
      <svg viewBox="0 0 23 23"><path d="M.8 11.500L9 2.500c2-2 3-2 5 0l8.300 9L14 20.500c-2 2-3 2-5 0zM7.500 4.500l8 8-4.500 5-7-9.500M15 4.500L7 13l7 7M15.500 12.500l3.500-4" fill="#f8effa" stroke="#9a3aa8" stroke-width="1.400"/></svg>
      <svg viewBox="0 0 23 23"><path d="M1 2h13.500l8 9.500-8 9.500H1l8-9.500zM6 20L20 7.500M11 20L22 9M9 11.500L18 3" fill="#fff" stroke="#0f7be0" stroke-width="1.500" stroke-linejoin="round"/></svg>
    </div>
    <svg class="more" viewBox="0 0 20 4"><path d="M1 1h2v2H1zM8.500 1h2v2h-2zM16 1h2v2h-2z" fill="#252423"/></svg>
    <div class="wells">
      <p>Values</p>
      <div class="well a">Add data fields here</div>
      <p class="dt">Drill through</p>
      <div class="row"><span>Cross-report</span><div class="tog"><i></i>Off</div></div>
      <div class="row r2"><span>Keep all filters</span><div class="tog yes">On<i></i></div></div>
      <div class="well c">Add drill-through fields here</div>
    </div>
  </aside>

  <aside class="data">
    <div class="head"><h2>Data</h2><svg><use href="#dbl"/></svg></div>
    <div class="dsearch"><svg viewBox="0 0 18 18"><circle cx="7.500" cy="7.500" r="6.500" fill="none" stroke="#484644" stroke-width="1.200"/><path d="M12 12l5.500 5.500" stroke="#484644" stroke-width="1.200"/></svg>Search</div>
    <div class="item"><svg class="ex" viewBox="0 0 9 16"><path d="M1 1l7 7-7 7" fill="none" stroke="#484644" stroke-width="1.200"/></svg><svg class="ti"><use href="#tbl"/></svg>Portfolio level data</div>
    <div class="item"><svg class="ex" viewBox="0 0 9 16"><path d="M1 1l7 7-7 7" fill="none" stroke="#484644" stroke-width="1.200"/></svg><svg class="ti"><use href="#tbl"/></svg>Transactional level data</div>
  </aside>
</main>

<footer class="status">
  <span class="pg">Page 1 of 5</span>
  <svg class="zoomer" width="160" height="20" viewBox="0 0 160 20"><path d="M4 10h5.500M147 10h11M152.500 4.500v11" stroke="#484644" stroke-width="1.800"/><path d="M16 10h124M79 6.500v7" stroke="#484644" stroke-width="1.200"/><path d="M63 4h5v12h-5z" fill="#605e5c"/></svg>
  <span class="pct">82%</span>
  <svg class="fit" viewBox="0 0 22 17"><rect x=".8" y=".8" width="20.400" height="15.400" fill="none" stroke="#605e5c" stroke-width="1.500"/><path d="M4 6.500V3.500h3.500M14.500 3.500H18v3M18 10.500v3h-3.500M7.500 13.500H4v-3" fill="none" stroke="#605e5c" stroke-width="1.300"/></svg>
</footer>
</body>
</html>
```
FILE: styles.css
```css
* { box-sizing: border-box; }
body {
  margin: 0;
  width: 1919px;
  height: 1018px;
  overflow: hidden;
  display: flex;
  flex-direction: column;
  background: #fff;
  color: #252423;
  font-family: "Open Sans", "Noto Sans", sans-serif;
  font-size: 14px;
}
svg { display: block; flex: none; }
i { font-style: normal; }
u { text-decoration: none; }
.defs { position: absolute; }
h2, h3, p { margin: 0; font-weight: 600; }

/* Title bar */
.titlebar { height: 43px; flex: none; display: flex; align-items: center; background: #3b3a39; color: #fff; padding-left: 21px; }
.i-save { width: 19px; height: 19px; }
.i-undo { width: 17px; height: 19px; margin-left: 20px; }
.i-redo { width: 17px; height: 19px; margin-left: 19px; }
.doc { margin-left: 13px; width: 419px; padding-top: 5px; font-size: 14.5px; letter-spacing: -0.17px; white-space: nowrap; }
.doc i { margin: 0 1px; }
.i-caret { width: 12px; height: 6px; margin-left: 8px; }
.topsearch { width: 500px; height: 30px; margin-left: 312px; display: flex; align-items: center; gap: 13px; padding-left: 22px; background: #d2d2d0; border-radius: 3px; color: #1d5a4f; font-size: 16.5px; letter-spacing: 0.1px; }
.topsearch svg { width: 20px; height: 20px; }
.topsearch span { margin-top: -1px; }
.signin { margin-left: 276px; width: 57px; font-size: 14.5px; letter-spacing: 0; }
.i-user { width: 26px; height: 26px; }
.i-win { width: 130px; height: 20px; margin-left: 38px; }

/* Ribbon tabs */
.tabs { height: 43px; flex: none; display: flex; background: #fafafa; font-size: 17px; line-height: 39px; letter-spacing: -0.1px; text-align: center; }
.tabs b { display: inline-block; width: 48px; height: 38px; font-weight: 600; letter-spacing: -0.5px; border-bottom: 3px solid #117865; }
.t1 { width: 82px; } .t2 { width: 86px; } .t3 { width: 83px; } .t4 { width: 113px; }
.t5 { width: 77px; } .t6 { width: 108px; } .t7 { width: 78px; }
.share { width: 105px; height: 30px; margin: 5px 6px 0 auto; display: flex; align-items: center; padding-left: 8px; background: #117865; border-radius: 5px; color: #fff; font-size: 15px; letter-spacing: -0.5px; line-height: 28px; }
.share svg { width: 20px; height: 20px; margin-right: 11px; }
.share .sc { width: 13px; height: 8px; margin: 0 0 0 5px; }

/* Ribbon groups */
.ribbon { height: 114px; flex: none; display: flex; position: relative; z-index: 2; background: #fafafa; box-shadow: 0 1px 4px rgba(0,0,0,.22); }
.group { display: flex; flex-direction: column; height: 110px; margin-top: 2px; border-right: 1px solid #d2d0ce; }
.group label { margin-top: auto; height: 14px; line-height: 15px; text-align: center; font-size: 12px; letter-spacing: -0.2px; }
.body { display: flex; padding-top: 6px; }
.btn { display: flex; flex-direction: column; align-items: center; line-height: 20px; font-size: 14px; letter-spacing: 0; text-align: center; white-space: nowrap; }
.btn > span { margin-top: 3px; }
.wideicon > svg { margin-left: 4px; }
.off .btn, .off.btn, .off .clips { color: #c1bfbd; }
.ch { display: inline-block; width: 9px; height: 7px; margin-left: 1px; vertical-align: 0; }
.btn .ch { margin: 0 -1px 0 0; }
.g-clip { width: 201px; } .g-data { width: 449px; } .g-query { width: 145px; } .g-insert { width: 183px; }
.g-calc { width: 233px; } .g-sens { width: 92px; } .g-share { width: 74px; } .g-cop { width: 164px; }
.g-data .body { padding-left: 8px; } .g-query .body { padding-left: 11px; } .g-insert .body { padding-left: 12px; }
.g-calc .body { padding-left: 9px; } .g-cop .body { padding-left: 8px; }
.w46 { width: 46px; } .w47 { width: 47px; } .w50 { width: 50px; } .w54 { width: 54px; } .w56 { width: 56px; }
.w59 { width: 59px; letter-spacing: -0.2px; } .w60 { width: 60px; letter-spacing: -0.2px; } .w62 { width: 62px; letter-spacing: -0.2px; } .w65 { width: 65px; letter-spacing: -0.2px; } .w66 { width: 66px; }
.w68 { width: 68px; letter-spacing: -0.2px; } .w72 { width: 72px; } .w74 { width: 74px; letter-spacing: -0.1px; } .w91 { width: 91px; } .w92 { width: 92px; } .w94 { width: 94px; }
.qm svg { margin-left: -8px; }
.paste { width: 40px; margin-left: 18px; align-items: flex-end; padding-right: 2px; letter-spacing: -0.2px; }
.paste > svg { margin-right: -1px; }
.paste span { width: 42px; }
.clips { display: flex; flex-direction: column; margin: -7px 0 0 7px; font-size: 14px; letter-spacing: 0; }
.clips div { display: flex; align-items: center; gap: 5px; height: 30px; white-space: nowrap; }
.fx { font: italic 25px "Liberation Serif", serif; fill: #a19f9d; letter-spacing: 0; }
.collapse { width: 12px; height: 8px; margin: 99px 4px 0 auto; }

/* Work area */
.work { flex: 1; display: flex; min-height: 0; }
.rail { width: 51px; flex: none; background: #f3f2f1; border-right: 1px solid #d8d6d4; }
.rail div { height: 50px; display: flex; align-items: center; justify-content: center; padding: 0 0 2px; }
.rail .on { border-left: 3px solid #117865; padding: 0 3px 0 0; }
.rail .low { padding: 0; }
.tiny { font: 600 9px "Open Sans", sans-serif; fill: #797775; }
.center { width: 1417px; flex: none; display: flex; flex-direction: column; }
.stage { height: 746px; display: flex; }
.canvas { width: 1377px; position: relative; overflow: hidden; border-right: 1px solid #a19f9d; }
.page {
  position: absolute; left: 32px; top: 0; width: 1312px; height: 738px;
  background:
    repeating-linear-gradient(#605e5c 0 2px, transparent 2px 4px) 0 0 / 2px 100% no-repeat,
    repeating-linear-gradient(#605e5c 0 2px, transparent 2px 4px) 100% 0 / 2px 100% no-repeat,
    repeating-linear-gradient(90deg, #605e5c 0 2px, transparent 2px 4px) 0 100% / 100% 2px no-repeat;
}
.kpi { position: absolute; width: 240px; margin-left: -119px; display: flex; flex-direction: column; align-items: center; white-space: nowrap; }
.kpi b { height: 40px; margin-top: -0.5px; font: 500 55px/40px Roboto, sans-serif; letter-spacing: 3.5px; margin-right: -4px; transform: scaleX(.86); }
.kpi b i { letter-spacing: -1px; }
.kpi b u { display: inline-block; transform: scaleX(.88); margin: 0 -3px 0 -2px; }
.kpi span { margin-top: 12.5px; line-height: 20px; font-size: 15px; color: #605e5c; letter-spacing: 0.05px; }
.selected { position: absolute; left: 803px; top: 401px; width: 266px; height: 158px; border: 1px solid #e6e5e4; }
.selected::after { content: ""; position: absolute; right: -2px; top: 9px; width: 27px; height: 150px; background: #fff; }
.vfilter { position: absolute; left: 1009px; top: 376px; width: 20px; height: 20px; }
.vmore { position: absolute; left: 1043px; top: 384px; width: 20px; height: 4px; fill: #797775; }
.next { position: absolute; left: 1106px; top: 656px; width: 162px; height: 82px; }

.filters { width: 40px; display: flex; flex-direction: column; align-items: center; }
.filters .dl { width: 16px; height: 16px; margin: 15px 0 0 1px; transform: scaleX(-1); }
.filters .ff { width: 16px; height: 16px; margin: 20px 0 0 7px; }
.filters span { margin: 10px 0 0 2px; writing-mode: vertical-rl; font-weight: 600; font-size: 18px; letter-spacing: 0; line-height: 20px; }

/* Page tabs */
.pages { height: 44px; display: flex; line-height: 45px; text-align: center; font-size: 14.5px; letter-spacing: -0.13px; white-space: nowrap; }
.views { width: 160px; display: flex; background: #f3f2f1; border-right: 1px solid #a19f9d; }
.desk { width: 30px; height: 38px; margin-left: 13px; padding: 8px 1px 0; border-bottom: 3px solid #117865; }
.phone { width: 18px; height: 26px; margin: 5px 0 0 31px; }
.arr { width: 6px; height: 10px; margin: 16px 0 0 25px; }
.arr.r { margin-left: 23px; }
.pt { border-right: 1px solid #c8c6c4; }
.cur { width: 38px; display: flex; font-weight: 600; border-bottom: 5px solid #117865; }
.cur span { width: 25px; text-align: left; padding-left: 1px; }
.cur i { line-height: 22px; font-size: 13px; }
.p2 { width: 325px; } .p3 { width: 252px; } .p4 { width: 284px; } .p5 { width: 309px; border: 0; }
.plus { width: 49px; background: #117865; display: flex; align-items: center; justify-content: center; padding-bottom: 3px; }

/* Visualizations pane */
.viz { width: 227px; flex: none; background: #f3f2f1; border-left: 1px solid #e1dfdd; border-right: 1px solid #e1dfdd; }
.head { display: flex; justify-content: space-between; align-items: center; height: 50px; padding: 0 10px 0 10px; }
.head h2 { font-size: 19px; letter-spacing: -0.1px; margin-top: -1px; }
.head svg { width: 16px; height: 16px; margin-top: -1px; }
.viz h3 { padding-left: 10px; font-size: 14.5px; line-height: 14px; letter-spacing: -0.15px; }
.modes { display: flex; margin-top: 8px; padding-left: 10px; }
.m1 { width: 40px; height: 40px; padding: 4px; background: #d2d0ce; border-radius: 2px; }
.m2 { margin: 4px 0 0 47px; }
.notch { width: 225px; height: 12px; margin-top: 5px; }
.icons { display: grid; grid-template-columns: repeat(6, 23px); gap: 12px; margin: 13px 0 0 14px; }
.icons svg { width: 23px; height: 23px; overflow: visible; }
.icons .wide { width: 24px; height: 24px; margin: 0 -1px -1px 0; }
.w { fill: #fafafa; stroke: #797775; stroke-width: 1.3; }
.g { fill: #c8c6c4; stroke: #8a8886; stroke-width: 1.3; }
.b { fill: #83beec; stroke: #106ebe; stroke-width: 1.3; }
.o { fill: #ffb65c; stroke: #dd6b00; stroke-width: 1.2; }
.k { fill: none; stroke: #3b3a39; stroke-width: 1.6; }
.k2 { stroke: #3b3a39; stroke-width: 1.5; }
.bl { fill: none; stroke: #106ebe; stroke-width: 1.5; }
.bl2 { fill: none; stroke: #106ebe; stroke-width: 2.4; }
.gl { fill: none; stroke: #797775; stroke-width: 1.3; }
.n123 { font: 11px "Open Sans", sans-serif; fill: #2b88d8; letter-spacing: -0.3px; }
.lang { font: 700 20px "Open Sans", sans-serif; fill: #1f83cb; letter-spacing: -0.5px; }
.more { width: 20px; height: 4px; margin: 19px 0 0 15px; }
.wells { margin-top: 23px; border-top: 1px solid #e1dfdd; padding: 0 7px 0 5px; letter-spacing: 0.05px; }
.wells p { padding: 12px 0 0 10px; line-height: 18px; font-weight: 400; font-size: 14px; }
.well { background: #fff; border: 1px dashed #c8c6c4; font-size: 14px; border-radius: 2px; white-space: nowrap; letter-spacing: 0.15px; }
.well.a { height: 35px; margin-top: 7px; line-height: 34px; padding-left: 12px; }
.well.c { height: 32px; margin-top: 13px; line-height: 32px; padding-left: 10px; }
.wells .dt { padding-top: 15px; font-weight: 600; color: #484644; letter-spacing: 0.2px; }
.row { display: flex; justify-content: space-between; align-items: center; height: 20px; margin: 12px 20px 0 10px; line-height: 18px; }
.row span { margin-top: -1px; }
.row.r2 { margin-top: 14px; }
.tog { width: 40px; height: 20px; display: flex; align-items: center; justify-content: center; gap: 2px; border: 1px solid #797775; border-radius: 10px; background: #fff; color: #605e5c; font-size: 11px; line-height: 20px; }
.tog i { width: 10px; height: 10px; border-radius: 50%; background: #605e5c; }
.tog.yes { background: #117865; border-color: #117865; color: #fff; gap: 4px; }
.tog.yes i { background: #fff; }

/* Data pane */
.data { flex: 1; background: #f3f2f1; }
.data .head { padding: 0 9px 0 11px; }
.dsearch { height: 30px; margin: 7px 4px 16px 5px; display: flex; align-items: center; gap: 10px; padding-left: 14px; background: #fff; border: 1px solid #c8c6c4; border-bottom-color: #605e5c; border-radius: 4px; color: #605e5c; font-size: 16.5px; letter-spacing: 0; padding-top: 1px; }
.dsearch svg { width: 18px; height: 18px; }
.item { display: flex; align-items: center; height: 22px; margin: -1px 0 9px; padding-left: 19px; letter-spacing: 0; white-space: nowrap; color: #3b3a39; }
.ex { width: 9px; height: 16px; margin-right: 8px; }
.ti { width: 16px; height: 16px; margin-right: 7px; }

/* Status bar */
.status { height: 28px; flex: none; display: flex; align-items: center; padding: 3px 0 0 5px; background: #f3f2f1; border-top: 1px solid #e1dfdd; color: #484644; letter-spacing: 0.05px; }
.pg { font-size: 14.5px; }
.zoomer { margin: -2px 0 0 auto; }
.pct { width: 52px; margin: -2px 0 0 13px; color: #605e5c; }
.fit { width: 22px; height: 17px; margin-right: 21px; }
```
